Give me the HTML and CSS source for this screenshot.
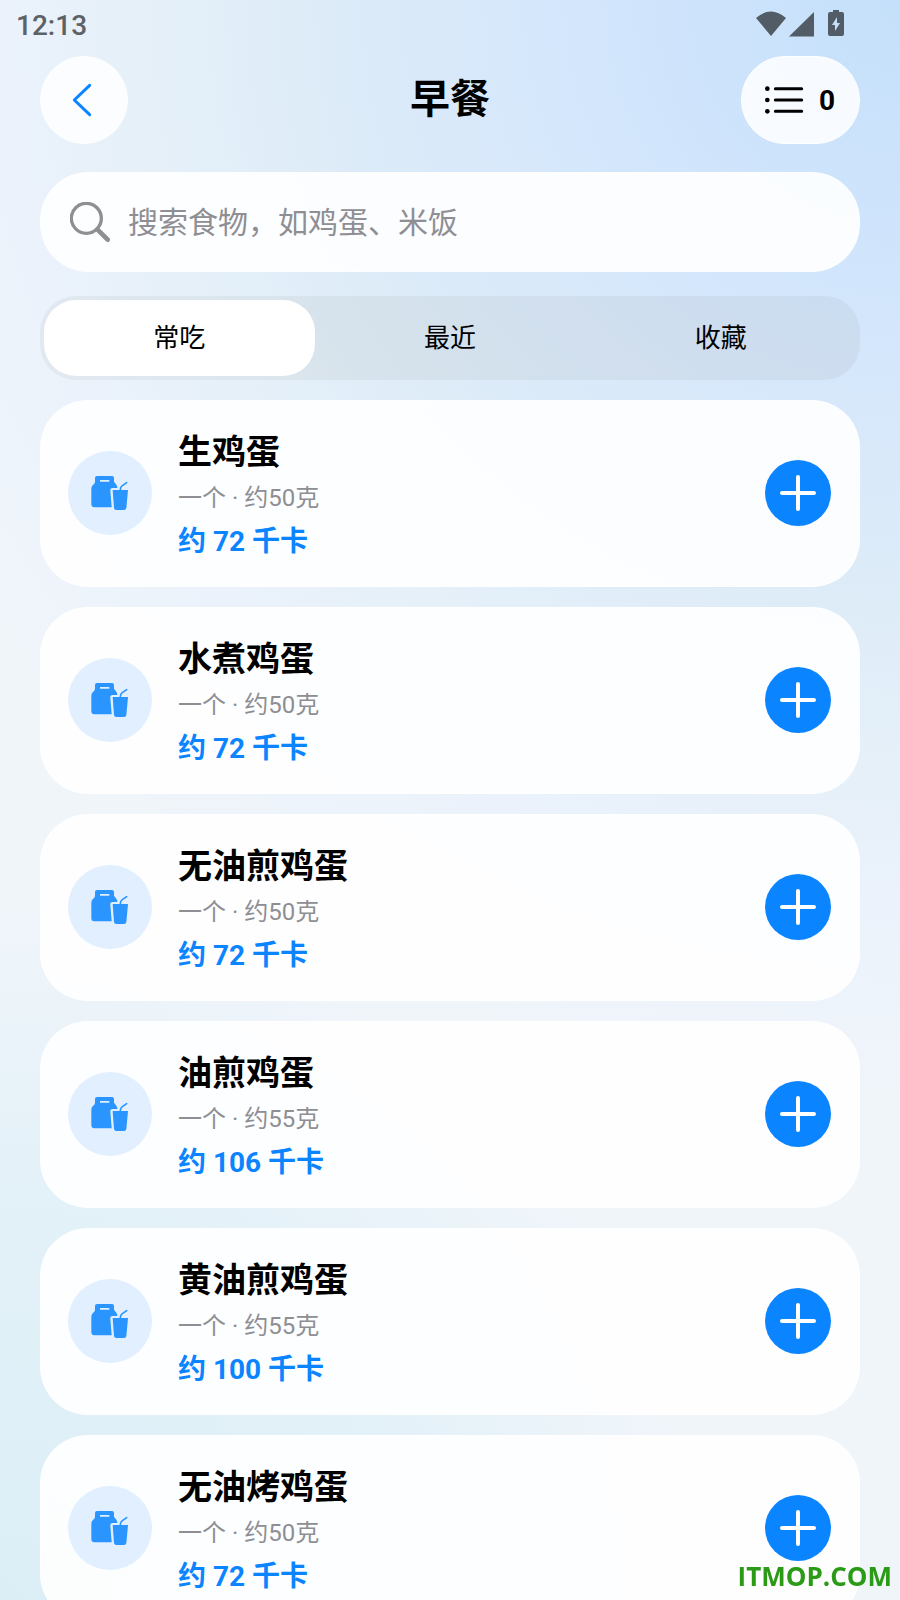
FILE: index.html
```html
<!DOCTYPE html>
<html lang="zh-CN">
<head>
    <meta charset="UTF-8">
    <meta name="viewport" content="width=device-width, initial-scale=1">
    <title>早餐</title>
    <link rel="stylesheet" href="styles.css">
</head>
<body>
    <!-- shared icons -->
    <svg class="sprite" aria-hidden="true">
        <symbol id="food" viewBox="90 99 120 120">
            <path fill="currentColor" fill-rule="evenodd" d="M111 108H156Q162 108 162 114V125L169 134Q172 138 172 144H158Q150 144 151 152L155 202H103Q94 202 94 193V146Q94 139 99 135Q105 130 105 125V114Q105 108 111 108ZM120 120V125H148V120Z"/>
            <path fill="currentColor" d="M158 150H204L199 204Q198 210 192 210H169Q163 210 162 204Z"/>
            <path fill="none" stroke="currentColor" stroke-width="5" stroke-linecap="round" d="M181 149Q181 141 187 137L200 128"/>
        </symbol>
        <symbol id="plus" viewBox="0 0 36 36">
            <path fill="none" stroke="currentColor" stroke-width="4" stroke-linecap="round" d="M18 2V34M2 18H34"/>
        </symbol>
    </svg>

    <div class="app">
        <div class="status">
            <span class="time">12:13</span>
            <svg width="90" height="28" viewBox="0 0 90 28" fill="#525c66" aria-hidden="true">
                <path d="M0 8Q15-5 30 8L15 26Z"/>
                <path d="M33 26.500L58 2V26.500Z"/>
                <path fill-rule="evenodd" d="M77 0H83V2H86Q88 2 88 4V24Q88 26 86 26H74Q72 26 72 24V4Q72 2 74 2H77ZM81 7L76 15H79V21L84 13H81Z"/>
            </svg>
        </div>

        <header class="header">
            <button class="back" aria-label="返回">
                <svg width="40" height="40" viewBox="192 240 120 120"><path d="M269 256L223 300L269 344"/></svg>
            </button>
            <h1>早餐</h1>
            <button class="count" aria-label="已选 0">
                <svg width="40" height="40" viewBox="942 240 120 120">
                    <path d="M976 266H1055M976 300H1055M976 334H1055"/>
                    <circle cx="952" cy="266" r="7"/>
                    <circle cx="952" cy="300" r="7"/>
                    <circle cx="952" cy="334" r="7"/>
                </svg>
                <span>0</span>
            </button>
        </header>

        <label class="search">
            <svg width="40" height="40" viewBox="210 605 120 120" aria-hidden="true">
                <circle cx="259" cy="654" r="45"/>
                <path d="M292 687L323 718"/>
            </svg>
            <input type="text" placeholder="搜索食物，如鸡蛋、米饭" aria-label="搜索食物">
        </label>

        <div class="tabs">
            <button class="tab active">常吃</button>
            <button class="tab">最近</button>
            <button class="tab">收藏</button>
        </div>

        <main class="list">
            <div class="card">
                <div class="thumb"><svg><use href="#food"/></svg></div>
                <div class="info">
                    <h2>生鸡蛋</h2>
                    <p class="portion">一个 · 约50克</p>
                    <p class="kcal">约 72 千卡</p>
                </div>
                <button class="add" aria-label="添加"><svg><use href="#plus"/></svg></button>
            </div>
            <div class="card">
                <div class="thumb"><svg><use href="#food"/></svg></div>
                <div class="info">
                    <h2>水煮鸡蛋</h2>
                    <p class="portion">一个 · 约50克</p>
                    <p class="kcal">约 72 千卡</p>
                </div>
                <button class="add" aria-label="添加"><svg><use href="#plus"/></svg></button>
            </div>
            <div class="card">
                <div class="thumb"><svg><use href="#food"/></svg></div>
                <div class="info">
                    <h2>无油煎鸡蛋</h2>
                    <p class="portion">一个 · 约50克</p>
                    <p class="kcal">约 72 千卡</p>
                </div>
                <button class="add" aria-label="添加"><svg><use href="#plus"/></svg></button>
            </div>
            <div class="card">
                <div class="thumb"><svg><use href="#food"/></svg></div>
                <div class="info">
                    <h2>油煎鸡蛋</h2>
                    <p class="portion">一个 · 约55克</p>
                    <p class="kcal">约 106 千卡</p>
                </div>
                <button class="add" aria-label="添加"><svg><use href="#plus"/></svg></button>
            </div>
            <div class="card">
                <div class="thumb"><svg><use href="#food"/></svg></div>
                <div class="info">
                    <h2>黄油煎鸡蛋</h2>
                    <p class="portion">一个 · 约55克</p>
                    <p class="kcal">约 100 千卡</p>
                </div>
                <button class="add" aria-label="添加"><svg><use href="#plus"/></svg></button>
            </div>
            <div class="card">
                <div class="thumb"><svg><use href="#food"/></svg></div>
                <div class="info">
                    <h2>无油烤鸡蛋</h2>
                    <p class="portion">一个 · 约50克</p>
                    <p class="kcal">约 72 千卡</p>
                </div>
                <button class="add" aria-label="添加"><svg><use href="#plus"/></svg></button>
            </div>
        </main>
    </div>

    <div class="watermark">ITMOP.COM</div>
</body>
</html>
```
FILE: styles.css
```css
* {
    box-sizing: border-box;
    margin: 0;
    padding: 0;
}

body {
    font-family: Roboto, "Noto Sans CJK SC", sans-serif;
    color: #000;
    background:
        radial-gradient(circle at 100% 0, #c5e0fa 0, #d1e5fc 15%, #d9e9fa 25%, #deecf8 33%, #e5f0f9 41%, #ebf2fb 49%, rgba(240, 245, 250, 0) 60%),
        radial-gradient(circle at 0 100%, #dbeef6 0, #e3f1f8 22%, rgba(240, 245, 250, 0) 38%),
        #f0f5fa;
}

button,
input {
    font: inherit;
    color: inherit;
    border: none;
    background: none;
}

.sprite {
    position: absolute;
    width: 0;
    height: 0;
}

.app {
    display: flex;
    flex-direction: column;
    height: 100vh;
    padding: 0 40px;
}

/* status bar */
.status {
    flex: none;
    display: flex;
    justify-content: space-between;
    height: 56px;
    margin: 0 -24px;
    padding-top: 10px;
}

.time {
    font-size: 28px;
    font-weight: 500;
    line-height: 32px;
    color: #5d6267;
}

.status svg {
    margin-right: 38px;
}

/* header */
.header {
    flex: none;
    display: grid;
    grid-template-columns: 1fr auto 1fr;
    align-items: center;
    height: 88px;
}

.header h1 {
    font-size: 40px;
    font-weight: 700;
    line-height: 60px;
}

.back,
.count {
    display: flex;
    align-items: center;
    justify-content: center;
    height: 88px;
    border: 1px solid #fff;
    border-radius: 44px;
    background: rgba(255, 255, 255, 0.85);
}

.back {
    width: 88px;
}

.back svg {
    fill: none;
    stroke: #0a84ff;
    stroke-width: 9;
    stroke-linecap: round;
    stroke-linejoin: round;
}

.count {
    justify-self: end;
    gap: 15px;
    width: 119px;
    padding-right: 2px;
    font-size: 28px;
    font-weight: 700;
}

.count path {
    stroke: #000;
    stroke-width: 9;
    stroke-linecap: round;
}

/* search */
.search {
    flex: none;
    display: flex;
    align-items: center;
    gap: 18px;
    height: 100px;
    margin: 28px 0 24px;
    padding: 0 29px;
    border: 1px solid #fff;
    border-radius: 48px;
    background: rgba(255, 255, 255, 0.9);
}

.search svg {
    fill: none;
    stroke: #8e8e93;
    stroke-width: 10;
}

.search path {
    stroke-width: 14;
    stroke-linecap: round;
}

.search input {
    flex: 1;
    min-width: 0;
    height: 60px;
    font-size: 30px;
    outline: none;
}

.search input::placeholder {
    color: #8e8e93;
}

/* tabs */
.tabs {
    flex: none;
    display: grid;
    grid-template-columns: repeat(3, 1fr);
    height: 84px;
    margin-bottom: 20px;
    padding: 4px;
    border-radius: 36px;
    background: rgba(118, 118, 100, 0.08);
}

.tab {
    padding-bottom: 6px;
    border-radius: 32px;
    font-size: 26px;
}

.tab.active {
    background: #fff;
}

/* food list */
.list {
    flex: 1;
    min-height: 0;
    overflow-y: auto;
    scrollbar-width: none;
}

.card {
    display: flex;
    align-items: center;
    gap: 26px;
    height: 187px;
    margin-bottom: 20px;
    padding: 0 28px 1px 27px;
    border: 1px solid rgba(255, 255, 255, 0.8);
    border-radius: 48px;
    background: rgba(255, 255, 255, 0.9);
}

.thumb {
    display: flex;
    align-items: center;
    justify-content: center;
    width: 84px;
    height: 84px;
    border-radius: 50%;
    background: #e1efff;
    color: #2a94ff;
}

.thumb svg {
    width: 40px;
    height: 40px;
}

.info {
    flex: 1;
    padding-top: 6px;
}

.info h2 {
    font-size: 34px;
    font-weight: 700;
    line-height: 50px;
}

.portion {
    font-size: 24px;
    line-height: 42px;
    color: #8e8e93;
}

.kcal {
    font-size: 28px;
    font-weight: 700;
    line-height: 46px;
    color: #0a84ff;
}

.add {
    display: flex;
    align-items: center;
    justify-content: center;
    width: 66px;
    height: 66px;
    border-radius: 50%;
    background: #0a84ff;
    color: #fff;
}

.add svg {
    width: 36px;
    height: 36px;
}

.watermark {
    position: fixed;
    right: 8px;
    bottom: 6px;
    font-family: "Open Sans", sans-serif;
    font-size: 26px;
    font-weight: 700;
    line-height: 36px;
    color: #2a9a17;
}
```
